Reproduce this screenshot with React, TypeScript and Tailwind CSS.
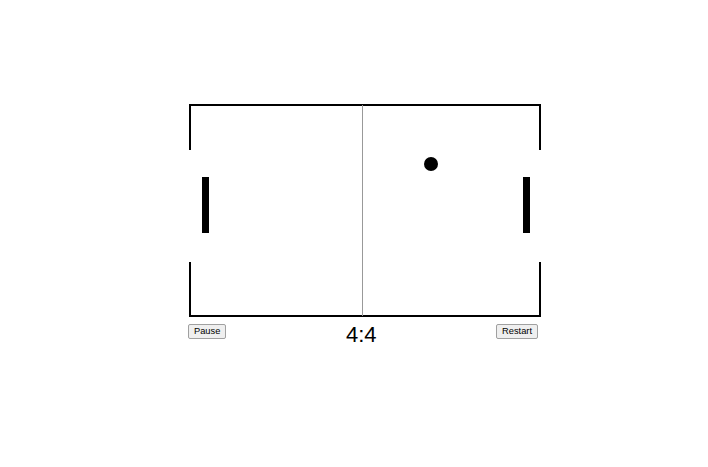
export default function App() {
  const score = { left: 4, right: 4 }

  return (
    <div className="min-h-screen bg-white pt-[103px] pl-[188px] font-['Liberation_Sans',Arial,sans-serif]">
      <div className="w-[354px]">
        <svg width="354" height="215" viewBox="0 0 354 215" className="block">
          {/* walls */}
          <line x1="1" y1="2" x2="353" y2="2" stroke="#000" strokeWidth="2" />
          <line x1="1" y1="213" x2="353" y2="213" stroke="#000" strokeWidth="2" />
          <line x1="2" y1="1" x2="2" y2="47" stroke="#000" strokeWidth="2" />
          <line x1="2" y1="159" x2="2" y2="214" stroke="#000" strokeWidth="2" />
          <line x1="352" y1="1" x2="352" y2="47" stroke="#000" strokeWidth="2" />
          <line x1="352" y1="159" x2="352" y2="214" stroke="#000" strokeWidth="2" />
          {/* net */}
          <line x1="174.5" y1="2" x2="174.5" y2="213" stroke="#999" strokeWidth="1" />
          {/* paddles */}
          <rect x="14" y="74" width="7" height="56" fill="#000" />
          <rect x="335" y="74" width="7" height="56" fill="#000" />
          {/* ball */}
          <circle cx="243" cy="61" r="7" fill="#000" />
        </svg>

        <div className="mt-[6px] flex items-start justify-between w-[350px]">
          <button className="h-[15px] px-[5px] text-[9.3px] leading-[11px] text-black bg-[#efefef] border border-[#a0a0a0] rounded-[2px]">
            Pause
          </button>
          <div className="text-[22px] leading-none text-black">
            {score.left}:{score.right}
          </div>
          <button className="h-[15px] px-[5px] text-[9.3px] leading-[11px] text-black bg-[#efefef] border border-[#a0a0a0] rounded-[2px]">
            Restart
          </button>
        </div>
      </div>
    </div>
  )
}
